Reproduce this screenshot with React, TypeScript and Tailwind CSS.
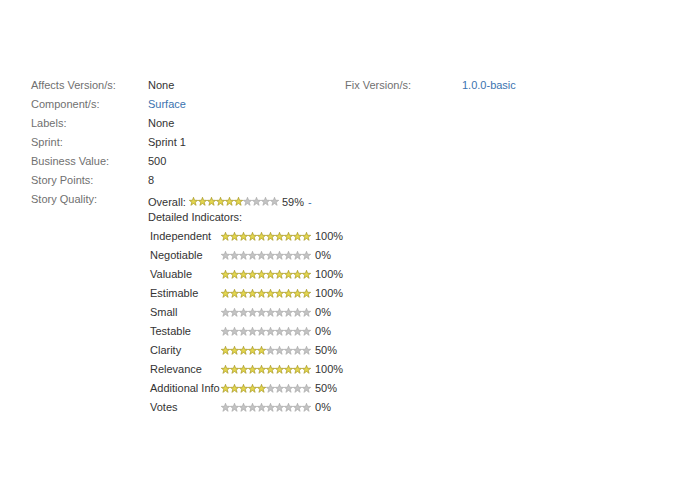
import React from 'react';

const labelCls = 'w-[117px] shrink-0 text-[#707070]';

const Star = ({ on }: { on: boolean }) => (
  <svg width="9" height="9" viewBox="0 0 10 10" className="shrink-0">
    <path
      d="M5 0.3 L6.2 3.6 L9.7 3.7 L6.9 5.8 L7.9 9.3 L5 7.2 L2.1 9.3 L3.1 5.8 L0.3 3.7 L3.8 3.6 Z"
      fill={on ? '#e4d64e' : '#c4c4c4'}
      stroke={on ? '#a08f1a' : '#a6a6a6'}
      strokeWidth="0.7"
      strokeLinejoin="round"
    />
  </svg>
);

const Stars = ({ filled }: { filled: number }) => (
  <span className="inline-flex items-center">
    {Array.from({ length: 10 }).map((_, i) => (
      <Star key={i} on={i < filled} />
    ))}
  </span>
);

const indicators: [string, number][] = [
  ['Independent', 100],
  ['Negotiable', 0],
  ['Valuable', 100],
  ['Estimable', 100],
  ['Small', 0],
  ['Testable', 0],
  ['Clarity', 50],
  ['Relevance', 100],
  ['Additional Info', 50],
  ['Votes', 0],
];

export default function App() {
  return (
    <div className="w-[695px] h-[494px] bg-white pt-[76px] pl-[31px] text-[11px] text-[#333] font-['Liberation_Sans',Arial,sans-serif]">
      <div className="flex">
        <div className="w-[314px]">
          {[
            ['Affects Version/s:', 'None', false],
            ['Component/s:', 'Surface', true],
            ['Labels:', 'None', false],
            ['Sprint:', 'Sprint 1', false],
            ['Business Value:', '500', false],
            ['Story Points:', '8', false],
          ].map(([label, value, link]) => (
            <div key={label as string} className="flex h-[19px] leading-[19px]">
              <div className={labelCls}>{label}</div>
              <div className={link ? 'text-[#3b73af]' : ''}>{value}</div>
            </div>
          ))}
          <div className="flex">
            <div className={`${labelCls} h-[19px] leading-[19px]`}>Story Quality:</div>
            <div className="pt-[5px]">
              <div className="flex items-center h-[14px] leading-[14px]">
                <span>Overall:</span>
                <span className="ml-[3px]">
                  <Stars filled={6} />
                </span>
                <span className="ml-[3px]">59%</span>
                <span className="ml-[4px] text-[#3b73af]">-</span>
              </div>
              <div className="h-[16px] leading-[16px]">Detailed Indicators:</div>
              <div className="pt-[2px]">
                {indicators.map(([name, pct]) => (
                  <div key={name} className="flex items-center h-[19px] leading-[19px]">
                    <div className="w-[73px] pl-[2px] whitespace-nowrap">{name}</div>
                    <Stars filled={pct / 10} />
                    <span className="ml-[4px]">{pct}%</span>
                  </div>
                ))}
              </div>
            </div>
          </div>
        </div>
        <div className="flex h-[19px] leading-[19px]">
          <div className={labelCls}>Fix Version/s:</div>
          <div className="text-[#3b73af]">1.0.0-basic</div>
        </div>
      </div>
    </div>
  );
}
